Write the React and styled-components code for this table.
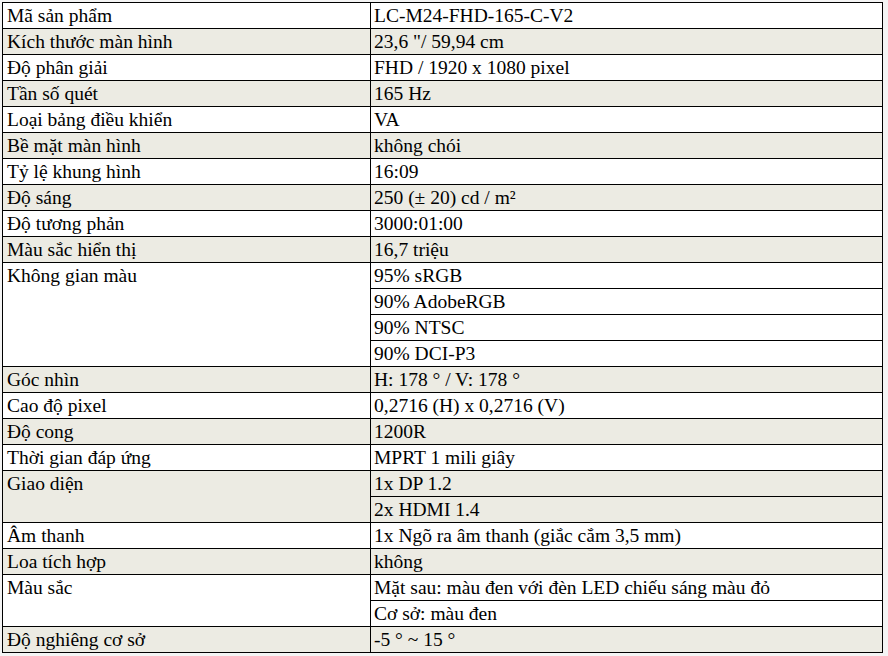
import styled, { createGlobalStyle } from 'styled-components';

/* S T Y L E D
* * * * * * */

const GlobalStyle = createGlobalStyle`
    html, body {
        margin: 0;
        padding: 0;
        background: #f4f4f4;
    }

    body {
        font-family: "Liberation Serif", "Times New Roman", serif;
        color: #000;
    }
`;

const Page = styled.div`
    padding: 2px 0 0 2px;
`;

const SpecTable = styled.table`
    width: 881px;
    border-collapse: collapse;
    table-layout: fixed;
    font-size: 19.5px;
    background: #fff;
`;

const LabelColumn = styled.col`
    width: 368px;
`;

const Cell = styled.td`
    height: 25px;
    padding: 0 2px 0 3px;
    border: 1px solid #000;
    line-height: 25px;
    vertical-align: top;
    white-space: nowrap;
    overflow: hidden;
    background: ${({ $shade }) => ($shade ? '#ecebe3' : '#fff')};
`;

const LabelCell = styled(Cell)`
    padding-left: 4px;
`;

/* D A T A
* * * * */

const specs = [
    ['Mã sản phẩm', ['LC-M24-FHD-165-C-V2']],
    ['Kích thước màn hình', ['23,6 "/ 59,94 cm']],
    ['Độ phân giải', ['FHD / 1920 x 1080 pixel']],
    ['Tần số quét', ['165 Hz']],
    ['Loại bảng điều khiển', ['VA']],
    ['Bề mặt màn hình', ['không chói']],
    ['Tỷ lệ khung hình', ['16:09']],
    ['Độ sáng', ['250 (± 20) cd / m²']],
    ['Độ tương phản', ['3000:01:00']],
    ['Màu sắc hiển thị', ['16,7 triệu']],
    ['Không gian màu', ['95% sRGB', '90% AdobeRGB', '90% NTSC', '90% DCI-P3']],
    ['Góc nhìn', ['H: 178 ° / V: 178 °']],
    ['Cao độ pixel', ['0,2716 (H) x 0,2716 (V)']],
    ['Độ cong', ['1200R']],
    ['Thời gian đáp ứng', ['MPRT 1 mili giây']],
    ['Giao diện', ['1x DP 1.2', '2x HDMI 1.4']],
    ['Âm thanh', ['1x Ngõ ra âm thanh (giắc cắm 3,5 mm)']],
    ['Loa tích hợp', ['không']],
    ['Màu sắc', ['Mặt sau: màu đen với đèn LED chiếu sáng màu đỏ', 'Cơ sở: màu đen']],
    ['Độ nghiêng cơ sở', ['-5 ° ~ 15 °']]
];

/* E X P O R T
* * * * * * */

export default function App() {

    return <>
        <GlobalStyle />
        <Page>
            <SpecTable>
                <colgroup>
                    <LabelColumn />
                    <col />
                </colgroup>
                <tbody>
                    {specs.map(([label, values], group) => {
                        const shade = group % 2 === 1;
                        return values.map((value, i) => <tr key={`${group}-${i}`}>
                            {i === 0 && <LabelCell $shade={shade} rowSpan={values.length}>{label}</LabelCell>}
                            <Cell $shade={shade}>{value}</Cell>
                        </tr>);
                    })}
                </tbody>
            </SpecTable>
        </Page>
    </>;

}
